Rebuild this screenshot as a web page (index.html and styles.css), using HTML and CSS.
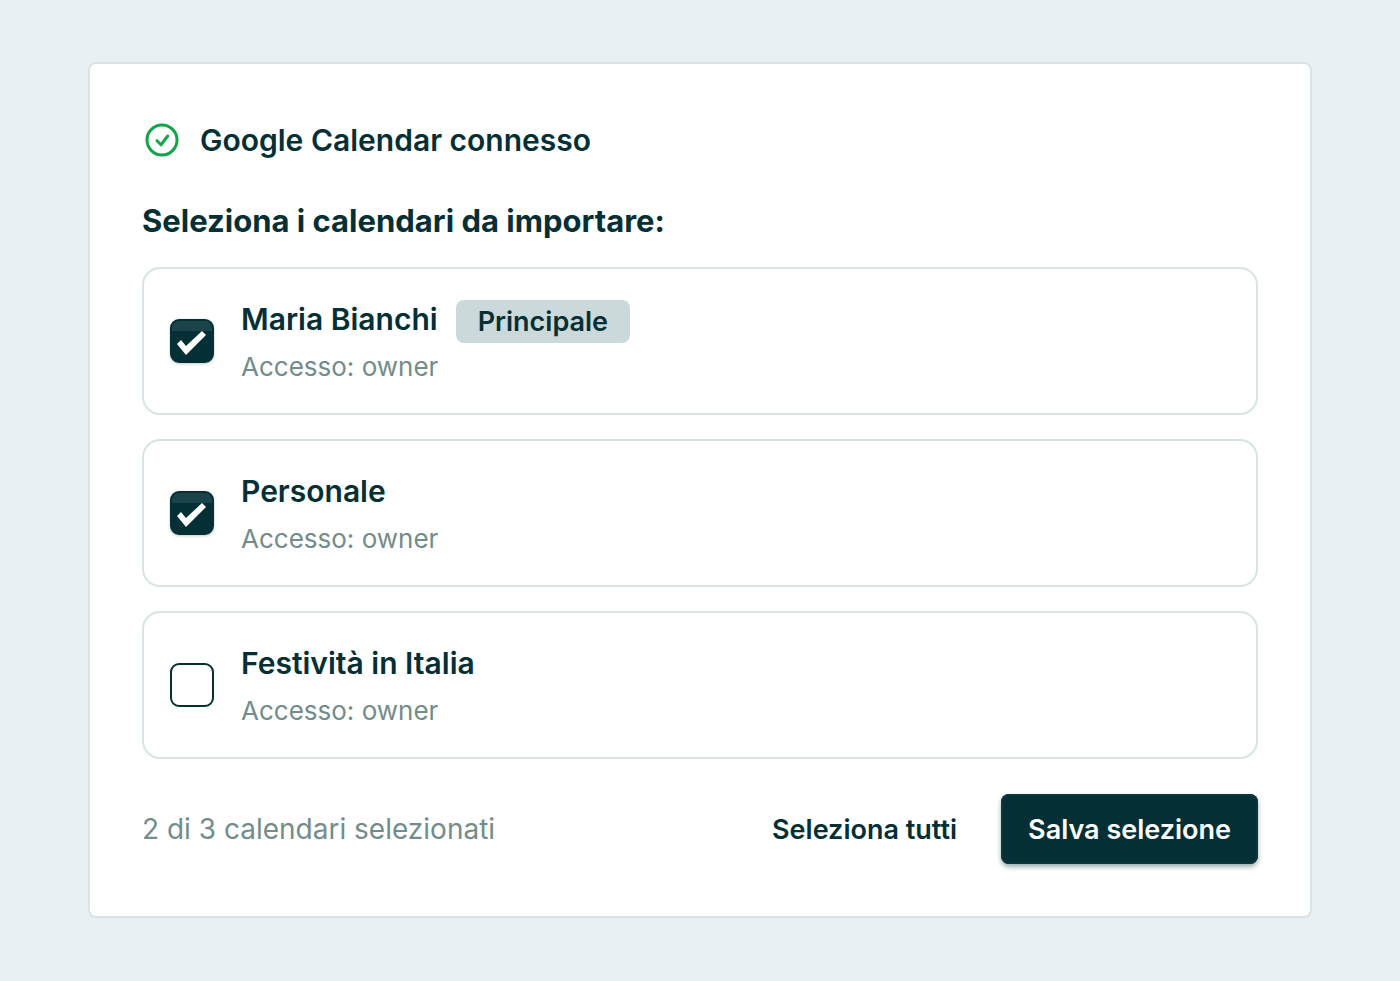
FILE: index.html
```html
<!DOCTYPE html>
<html lang="it">

<head>
    <meta charset="UTF-8">
    <meta name="viewport" content="width=device-width, initial-scale=1.0">
    <title>Google Calendar</title>
    <link rel="stylesheet" href="styles.css">
</head>

<body>
    <form class="card">
        <div class="status">
            <svg class="status-icon" viewBox="0 0 40 40" fill="none" stroke="#16a34a" stroke-width="3" stroke-linecap="round" stroke-linejoin="round" aria-hidden="true">
                <circle cx="20" cy="20" r="15" />
                <path d="M15 20.7l4 4.1 6.7-8.8" />
            </svg>
            <p class="status-text">Google Calendar connesso</p>
        </div>

        <h2 class="title">Seleziona i calendari da importare:</h2>

        <!-- Calendari -->
        <div class="calendars">
            <label class="calendar" for="cal-maria">
                <input class="check" type="checkbox" id="cal-maria" checked>
                <span class="info">
                    <span class="name">Maria Bianchi <span class="badge">Principale</span></span>
                    <span class="access">Accesso: owner</span>
                </span>
            </label>
            <label class="calendar" for="cal-personale">
                <input class="check" type="checkbox" id="cal-personale" checked>
                <span class="info">
                    <span class="name">Personale</span>
                    <span class="access">Accesso: owner</span>
                </span>
            </label>
            <label class="calendar" for="cal-festivita">
                <input class="check" type="checkbox" id="cal-festivita">
                <span class="info">
                    <span class="name">Festività in Italia</span>
                    <span class="access">Accesso: owner</span>
                </span>
            </label>
        </div>

        <div class="footer">
            <p class="count">2 di 3 calendari selezionati</p>
            <div class="actions">
                <button class="btn btn-ghost" type="button">Seleziona tutti</button>
                <button class="btn btn-primary" type="submit">Salva selezione</button>
            </div>
        </div>
    </form>
</body>

</html>
```
FILE: styles.css
```css
* {
    margin: 0;
    padding: 0;
    box-sizing: border-box;
}

body {
    padding: 62px 88px;
    font-family: Inter, "Liberation Sans", sans-serif;
    color: #042f35;
    background-color: #e8f0f3;
}

.card {
    padding: 52px;
    border: 2px solid #d8e4e4;
    border-radius: 8px;
    background-color: #ffffff;
}

.status {
    display: flex;
    align-items: center;
    gap: 18px;
}

.status-icon {
    width: 40px;
    height: 40px;
}

.status-text,
.name {
    font-size: 30px;
    font-weight: 600;
    line-height: 48px;
}

.title {
    margin: 33px 0 22px;
    font-size: 31px;
    font-weight: 700;
    line-height: 48px;
}

.calendars {
    display: flex;
    flex-direction: column;
    gap: 24px;
}

.calendar {
    display: flex;
    align-items: center;
    gap: 27px;
    padding: 26px;
    border: 2px solid #d8e4e4;
    border-radius: 18px;
    cursor: pointer;
}

.check {
    display: grid;
    place-items: center;
    flex-shrink: 0;
    width: 44px;
    height: 44px;
    appearance: none;
    border: 2px solid #042f35;
    border-radius: 9px;
    background-color: #ffffff;
    cursor: pointer;
}

.check:checked {
    background: linear-gradient(#1b4348 10px, #042f35 10px);
    box-shadow: 0 1px 3px rgba(4, 47, 53, 0.25);
}

.check:checked::before {
    content: "";
    width: 40px;
    height: 40px;
    background-color: #ffffff;
    clip-path: polygon(5px 23px, 9px 19px, 14px 25px, 30px 10px, 34px 14px, 14px 34px);
}

.info {
    display: flex;
    flex-direction: column;
    gap: 4px;
}

.name {
    display: flex;
    align-items: flex-end;
    gap: 18px;
}

.badge {
    padding: 0 22px;
    border-radius: 8px;
    font-size: 27px;
    line-height: 43px;
    background-color: #ccd9db;
}

.access {
    font-size: 26px;
    line-height: 40px;
    color: #728c8c;
}

.footer {
    display: flex;
    justify-content: space-between;
    align-items: center;
    margin-top: 35px;
}

.count {
    font-size: 28px;
    line-height: 40px;
    color: #728c8c;
}

.actions {
    display: flex;
    gap: 17px;
}

.btn {
    height: 70px;
    padding: 0 27px;
    border: none;
    border-radius: 8px;
    font-family: inherit;
    font-size: 27px;
    font-weight: 600;
    color: #042f35;
    background: none;
    cursor: pointer;
}

.btn-primary {
    color: #ffffff;
    background-color: #042f35;
    box-shadow: inset 0 0 0 2px #0b363c, 0 3px 5px rgba(4, 47, 53, 0.4);
}
```
